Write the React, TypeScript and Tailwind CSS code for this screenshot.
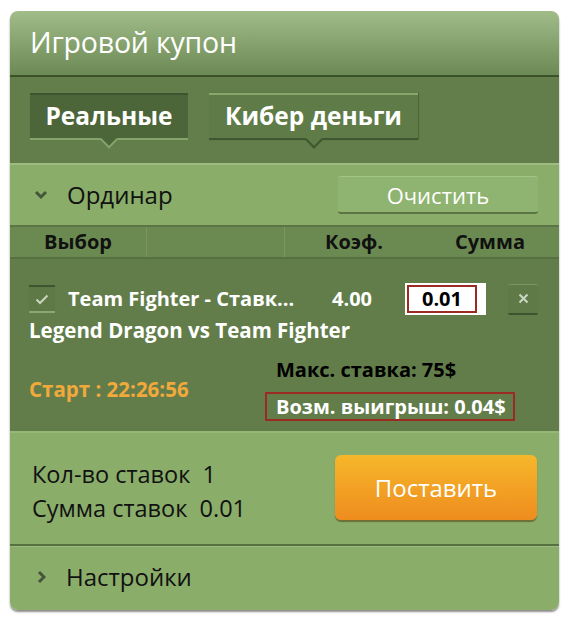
import React from "react";

const F = { fontFamily: '"Open Sans", "Noto Sans", sans-serif' };

export default function App() {
  return (
    <div className="bg-white w-[571px] h-[618px] pt-[11px] pl-[10px]" style={F}>
      <div className="w-[549px] rounded-[8px] overflow-hidden shadow-[0_2px_2px_rgba(0,0,0,0.45)]">
        {/* header */}
        <div className="h-[66px] bg-gradient-to-b from-[#a1bc89] to-[#6c8a55] border-b-2 border-[#3b5128] flex items-center pl-[20px] pb-[2px]">
          <span className="text-white text-[28.5px] leading-none tracking-[-0.2px]">Игровой купон</span>
        </div>
        {/* tabs */}
        <div className="h-[86px] bg-[#637e4a] flex items-start gap-[21px] pl-[20px] pt-[16px]">
          <div className="relative h-[47px] w-[158px] bg-[#4c6639] border-t-2 border-[#3f5430] border-b-2 border-b-[#86a46c] flex items-center justify-center">
            <span className="text-white font-bold text-[24.5px] leading-none">Реальные</span>
            <div className="absolute left-1/2 -bottom-[8px] w-[13px] h-[13px] -translate-x-1/2 rotate-45 bg-[#4c6639] border-r-2 border-b-2 border-[#86a46c]" />
          </div>
          <div className="relative h-[47px] w-[209px] bg-[#5f7c48] border-t-2 border-[#88a66e] border-b-2 border-b-[#3f5630] shadow-[1px_0_1px_rgba(0,0,0,0.2)] flex items-center justify-center">
            <span className="text-white font-bold text-[24.5px] leading-none">Кибер деньги</span>
            <div className="absolute left-1/2 -bottom-[8px] w-[13px] h-[13px] -translate-x-1/2 rotate-45 bg-[#5f7c48] border-r-2 border-b-2 border-[#3f5630]" />
          </div>
        </div>
        {/* ordinar */}
        <div className="h-[62px] bg-[#8aad6a] border-t-2 border-[#9dbd80] flex items-center justify-between pl-[24px] pr-[21px]">
          <div className="flex items-center gap-[19px]">
            <svg width="14" height="10" viewBox="0 0 14 10">
              <path d="M2 2 L7 7 L12 2" stroke="#45553a" strokeWidth="3" fill="none" />
            </svg>
            <span className="text-[#111] text-[24px] leading-none">Ординар</span>
          </div>
          <div className="w-[200px] h-[38px] rounded-[3px] bg-[#8fb370] border-t border-[#a3c486] border-b-2 border-b-[#5a7543] flex items-center justify-center">
            <span className="text-white text-[22px] leading-none">Очистить</span>
          </div>
        </div>
        {/* column header */}
        <div className="h-[34px] bg-[#6b8a51] border-t-2 border-[#5b7644] border-b-2 border-b-[#56703f] flex items-center font-bold text-[#111] text-[20px] leading-none">
          <div className="w-[137px] pl-[34px] h-full flex items-center border-r border-[#7a9760]">Выбор</div>
          <div className="w-[138px] h-full border-r border-[#7a9760]" />
          <div className="w-[135px] pl-[40px] h-full flex items-center">Коэф.</div>
          <div className="pl-[35px] h-full flex items-center">Сумма</div>
        </div>
        {/* bet */}
        <div className="h-[174px] bg-[#627d4a] border-b-2 border-[#95b778] pl-[19px] pt-[24px]">
          <div className="flex items-center h-[32px]">
            <div className="w-[26px] h-[28px] border-t-2 border-[#3f5430] border-b-2 border-b-[#8aa870] bg-[#5e7946] flex items-center justify-center">
              <svg width="14" height="11" viewBox="0 0 14 11">
                <path d="M1.5 5.5 L5 9 L12.5 1.5" stroke="#c9d3bf" strokeWidth="2" fill="none" />
              </svg>
            </div>
            <span className="ml-[13px] w-[264px] text-white font-bold text-[20px] leading-none whitespace-nowrap">Team Fighter - Ставк...</span>
            <span className="text-white font-bold text-[20px] leading-none w-[73px]">4.00</span>
            <div className="w-[81px] h-[32px] bg-white flex items-center pl-[2px]">
              <div className="w-[70px] h-[28px] border-2 border-[#9a2a22] flex items-center justify-center text-black font-bold text-[20px] leading-none">0.01</div>
            </div>
            <div className="ml-[22px] w-[30px] h-[31px] rounded-[2px] bg-[#5f7a47] border-t border-[#789460] border-b-2 border-b-[#3e5330] flex items-center justify-center">
              <svg width="11" height="11" viewBox="0 0 11 11">
                <path d="M1.5 1.5 L9.5 9.5 M9.5 1.5 L1.5 9.5" stroke="#cdd6c4" strokeWidth="2" />
              </svg>
            </div>
          </div>
          <div className="mt-[1px] text-white font-bold text-[20.5px] leading-[28px] whitespace-nowrap">Legend Dragon vs Team Fighter</div>
          <div className="flex mt-[12px]">
            <div className="w-[236px] pt-[23px] text-[#f2a93b] font-bold text-[20.5px] leading-none whitespace-nowrap">Старт : 22:26:56</div>
            <div className="flex flex-col items-start">
              <div className="ml-[11px] text-black font-bold text-[20px] leading-[28px] whitespace-nowrap">Макс. ставка: 75$</div>
              <div className="mt-[8px] h-[29px] w-[250px] border-2 border-[#9a2a22] flex items-center pl-[9px] text-white font-bold text-[20px] leading-none whitespace-nowrap">Возм. выигрыш: 0.04$</div>
            </div>
          </div>
        </div>
        {/* summary */}
        <div className="h-[113px] bg-[#8aad6a] border-b-2 border-[#56703f] flex items-center justify-between pl-[22px] pr-[22px]">
          <div className="text-[#111] text-[23.5px] leading-[34px] pt-[4px]">
            <div>Кол-во ставок&nbsp; 1</div>
            <div>Сумма ставок&nbsp; 0.01</div>
          </div>
          <div className="w-[202px] h-[65px] rounded-[6px] bg-gradient-to-b from-[#f6b72b] to-[#ee8c1e] shadow-[0_2px_1px_rgba(90,70,20,0.6)] flex items-center justify-center mb-[2px]">
            <span className="text-white text-[24px] leading-none">Поставить</span>
          </div>
        </div>
        {/* settings */}
        <div className="h-[64px] bg-[#8aad6a] border-t border-[#9dbd80] flex items-center pl-[27px] gap-[20px] pb-[3px]">
          <svg width="9" height="14" viewBox="0 0 9 14">
            <path d="M2 2 L7 7 L2 12" stroke="#45553a" strokeWidth="3" fill="none" />
          </svg>
          <span className="text-[#111] text-[24px] leading-none">Настройки</span>
        </div>
      </div>
    </div>
  );
}
